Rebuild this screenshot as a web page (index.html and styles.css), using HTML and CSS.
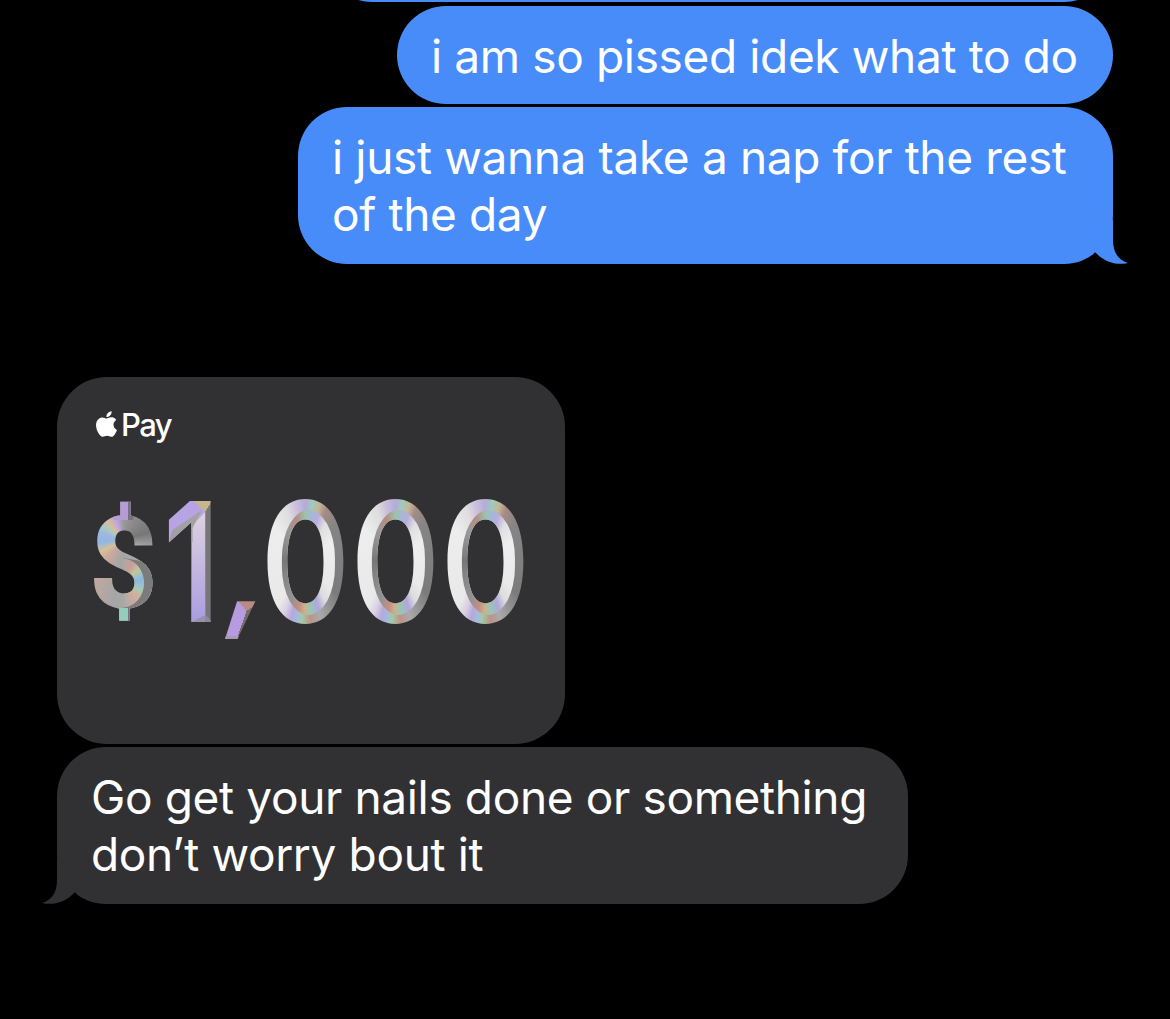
FILE: index.html
```html
<!DOCTYPE html>
<html lang="en">
<head>
<meta charset="utf-8">
<title>Messages</title>
<link rel="stylesheet" href="styles.css">
</head>
<body>
<main class="thread">
  <div class="bubble sent previous"></div>
  <div class="bubble sent"><span class="line">i am so pissed idek what to do</span></div>
  <div class="bubble sent wide">
    <span class="line">i just wanna take a nap for the rest</span>
    <span class="line">of the day</span>
    <svg class="tail" viewBox="0 0 52 46"><path class="tail-gap" d="M0 44 Q14 42 20 32 Q28 42 38 44 V46 H0Z"/><path d="M4 0H38V20C38 32 43 40 53 43C40 46 28 41 20 32L4 20Z"/></svg>
  </div>
  <section class="card">
    <header class="brand">
      <svg viewBox="2.2 0 19.6 24" aria-label="Apple"><path d="M12.152 6.896c-.948 0-2.415-1.078-3.96-1.04-2.04.027-3.91 1.183-4.961 3.014-2.117 3.675-.546 9.103 1.519 12.09 1.013 1.454 2.208 3.09 3.792 3.039 1.52-.065 2.09-.987 3.935-.987 1.831 0 2.35.987 3.96.948 1.637-.026 2.676-1.48 3.676-2.948 1.156-1.688 1.636-3.325 1.662-3.415-.039-.013-3.182-1.221-3.22-4.857-.026-3.04 2.48-4.494 2.597-4.559-1.429-2.09-3.623-2.324-4.39-2.376-2-.156-3.675 1.09-4.61 1.09zM15.53 3.83c.843-1.012 1.4-2.427 1.245-3.83-1.207.052-2.662.805-3.532 1.818-.78.896-1.454 2.338-1.273 3.714 1.338.104 2.715-.688 3.559-1.701"/></svg>
      <span>Pay</span>
    </header>
    <div class="amount">
      <span class="glyph dollar" data-g="$">$</span>
      <span class="glyph one" data-g="1">1</span>
      <span class="glyph comma" data-g=",">,</span>
      <span class="glyph zero" data-g="0">0</span>
      <span class="glyph zero" data-g="0">0</span>
      <span class="glyph zero" data-g="0">0</span>
    </div>
  </section>
  <div class="bubble received">
    <span class="line">Go get your nails done or something</span>
    <span class="line">don’t worry bout it</span>
    <svg class="tail" viewBox="0 0 52 46"><path class="tail-gap" d="M0 44 Q14 42 20 32 Q28 42 38 44 V46 H0Z"/><path d="M4 0H38V20C38 32 43 40 53 43C40 46 28 41 20 32L4 20Z"/></svg>
  </div>
</main>
</body>
</html>
```
FILE: styles.css
```css
* { box-sizing: border-box; }
body { margin: 0; background: #000; overflow: hidden; font-family: Inter, "Liberation Sans", sans-serif; }
.thread { width: 1170px; height: 1019px; padding: 0 57px; display: flex; flex-direction: column; overflow: hidden; }

/* message bubbles */
.bubble { position: relative; flex: none; height: 98px; border-radius: 49px; padding: 22px 34px; font-size: 46px; line-height: 56.5px; letter-spacing: -.36px; color: #fff; display: flex; flex-direction: column; }
.line { white-space: nowrap; }
.sent { align-self: flex-end; width: 716px; margin-bottom: 3px; background: #488cf9; }
.previous { width: 790px; margin-top: -96px; margin-bottom: 4px; }
.wide { width: 815px; height: 157px; }
.received { width: 851px; height: 157px; background: #313133; }
.tail { position: absolute; width: 52px; height: 46px; right: -14px; bottom: -2px; fill: #488cf9; overflow: visible; }
.tail .tail-gap { fill: #000; }
.received .tail { right: auto; left: -14px; transform: scaleX(-1); fill: #313133; }

/* payment card */
.card { flex: none; width: 508px; height: 367px; margin: 110px 0 3px; border-radius: 50px; background: #313133; padding: 34px 36px; }
.brand { display: flex; align-items: flex-start; gap: 4px; padding-left: 3px; height: 75px; color: #fff; font-size: 31px; font-weight: 500; line-height: 28px; letter-spacing: -1.6px; }
.brand svg { width: 21px; height: 26px; fill: #fff; }
.amount { display: grid; grid-template-columns: 61px 75px 31.5px 90px 90px 90px; justify-items: center; height: 150px; }

/* each numeral is clipped from its own facet gradients */
.glyph { position: relative; display: block; font-size: 167px; font-weight: 700; line-height: 150px; height: 150px; transform: scaleX(.78); }
.glyph, .glyph::before, .glyph::after { color: transparent; -webkit-background-clip: text; background-clip: text; }
.glyph::before, .glyph::after { content: attr(data-g); position: absolute; inset: 0; }
.zero::before { content: none; }
.zero { background-image: conic-gradient(#b3abd9 0deg, #a0cbbb 9deg, #c6b595 18deg, #a58b86 27deg, #858585 45deg, #7b7b7b 130deg, #9a9a9a 152deg, #aaa 162deg, #bd9389 174deg, #a5c9a2 184deg, #a2bddc 190deg, #b5a8dc 198deg, #d9d0e3 207deg, #e9e9e9 218deg, #ededed 310deg, #dedede 335deg, #cabfdb 348deg, #b3abd9 360deg); }
.zero::after { background-image: conic-gradient(#9bc4ab 0deg, #a9b5dd 12deg, #b9addd 20deg, #e0e0e0 34deg, #eee 60deg, #e9e9e9 130deg, #ddd 148deg, #b0a7dc 160deg, #99c5b6 172deg, #c9b290 181deg, #c58f81 190deg, #929292 206deg, #777 270deg, #999 325deg, #b68d82 345deg, #9bc4ab 360deg); clip-path: inset(24px calc(50% - 38px) 21px calc(50% - 30px) round 34px / 48px); }
.one { background-image: conic-gradient(at calc(50% + 18px) 129px, transparent 124deg, #8b8796 124deg 180deg, #9792ad 180deg 250deg, transparent 250deg), conic-gradient(at calc(50% + 18px) 26px, #c7b78e 0deg 39deg, #777 39deg 180deg, #b8a3e4 180deg 308deg, #c7b78e 308deg); }
.one::before { background-image: linear-gradient(#ddd1e0 20%, #aa9de0 90%); clip-path: polygon(calc(50% + 18px) 26px, calc(50% + 18px) 129px, calc(50% + 1px) 136px, calc(50% + 1px) 40px); }
.one::after { background-image: linear-gradient(#aaa, #8b8793); clip-path: polygon(calc(50% - 24px) 44px, calc(50% + 14px) 24px, calc(50% + 2px) 42px, calc(50% + 2px) 56px, calc(50% - 29px) 60px); }
.comma { top: 9px; left: -3px; font-size: 125px; transform: skewX(-10deg); transform-origin: 50% 125px; background-image: linear-gradient(transparent 141px, #a69cb2 141px), conic-gradient(at calc(50% + 3px) 116px, #b98a86 0deg 51deg, #726d6b 51deg 190deg, #b69be0 190deg 314deg, #b98a86 314deg); }
.comma::before, .comma::after { content: none; }
.dollar { top: 3px; font-family: Roboto, "Liberation Sans", sans-serif; font-size: 127px; -webkit-text-stroke: 1.5px transparent; transform: scaleX(.93); background-image: conic-gradient(at 50% 51px, #999 0deg, #777 75deg, #aaa 110deg, #a6a6a6 190deg, #cba99d 225deg, #d3c19b 245deg, #91b8e2 265deg, #9fb5e3 285deg, #a9cbc0 302deg, #d9bd9b 318deg, #bba7df 338deg, #999 360deg); }
.dollar::before { background-image: radial-gradient(ellipse 24px 25px at 48% 94px, transparent 96%, #7b7b7b 100%), conic-gradient(at 48% 94px, #aaa 0deg, #c89f96 30deg, #c1c79c 52deg, #8bb9e4 80deg, #abc9b1 110deg, #d4ac9b 135deg, #aaa 175deg, #b2aaa6 200deg, #b7aed4 215deg, #c7b18f 235deg, #c5a29b 250deg, #bbb 270deg, #999 360deg); clip-path: polygon(50% 69px, 110% 76px, 110% 122px, 50% 122px, 50% 94px); }
.dollar::after { background-image: linear-gradient(90deg, transparent 56%, #77717f 56%), linear-gradient(#b69bd6 50%, #96ccbc 50%); clip-path: polygon(35% 0, 65% 0, 65% 31px, 35% 31px, 35% 119px, 65% 119px, 65% 150px, 35% 150px); }
```
